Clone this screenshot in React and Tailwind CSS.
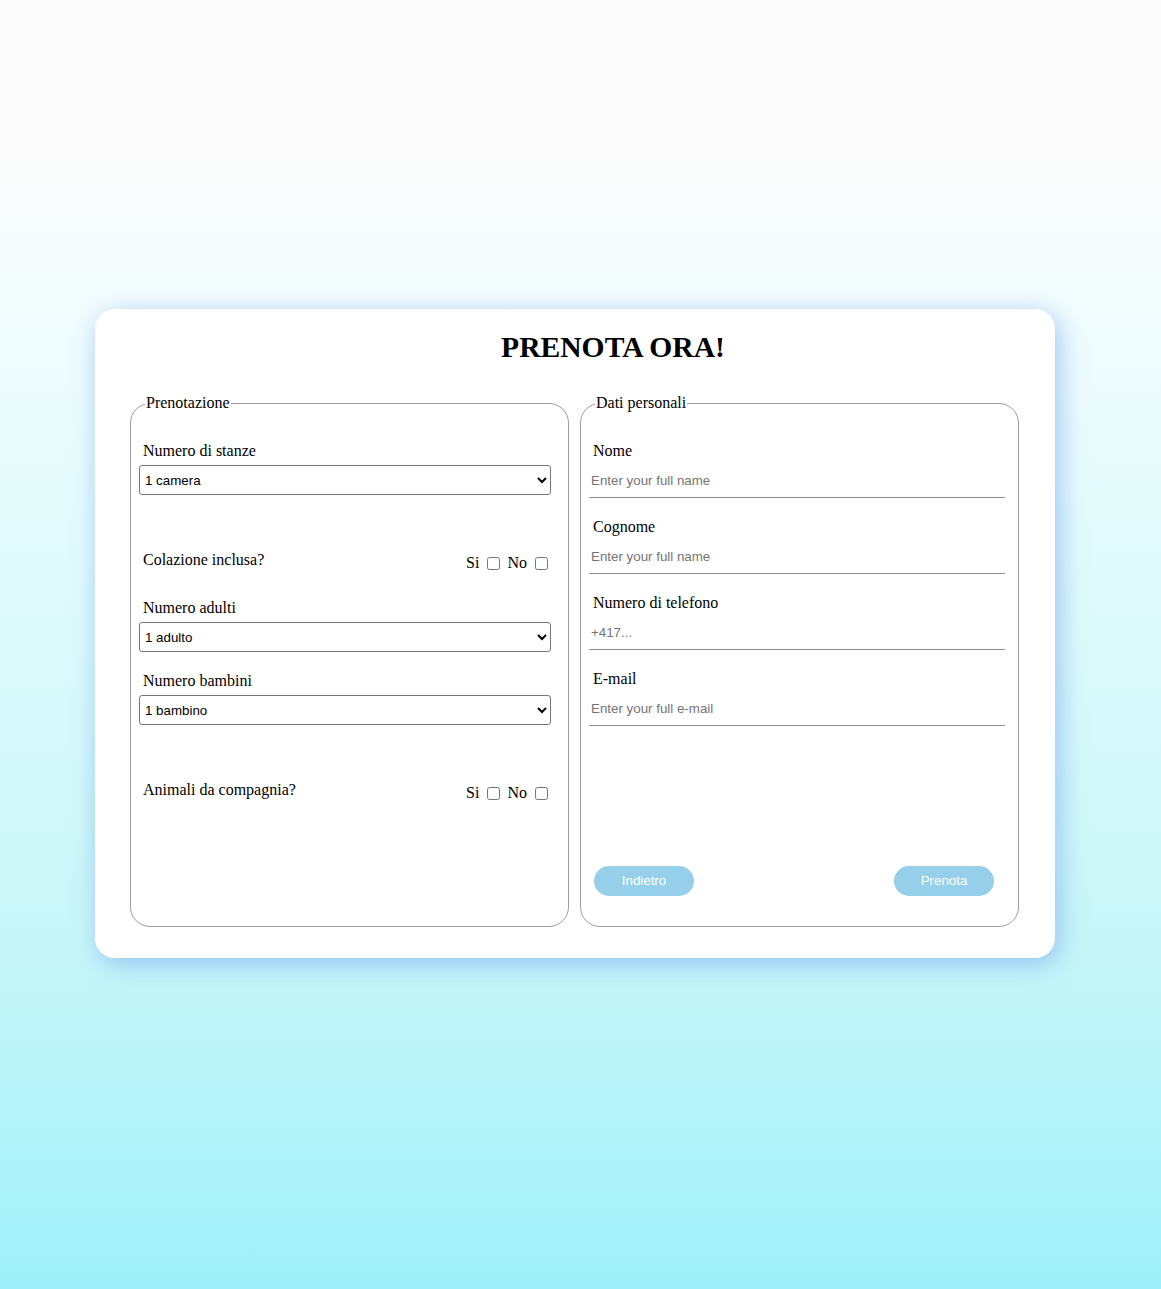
export default function App() {
  const serif = { fontFamily: '"Liberation Serif", "Times New Roman", serif' };
  const label = "block ml-[4px] text-[16px] leading-[18px] text-black";
  const selectCls =
    "block w-[412px] h-[30px] mt-[5px] pl-[1px] border border-[#767676] rounded-[3px] bg-white text-[13.33px] text-black font-['Liberation_Sans',Arial,sans-serif]";
  const inputCls =
    "block w-[416px] h-[32px] mt-[6px] px-[2px] pb-[2px] border-0 border-b border-[#8a8a8a] bg-transparent outline-none text-[13.33px] text-black placeholder:text-[#757575] font-['Liberation_Sans',Arial,sans-serif]";
  const cb = "w-[13px] h-[13px] m-0 ml-[8px]";

  const YesNo = () => (
    <div className="flex items-center mt-[3px] mr-[3px] text-[16px] leading-[18px]">
      <span>Si</span>
      <input type="checkbox" className={cb} />
      <span className="ml-[7px]">No</span>
      <input type="checkbox" className={cb} />
    </div>
  );

  return (
    <div
      className="min-h-[1289px] w-full bg-[linear-gradient(180deg,#fbfbfb_12%,#f1fdfe_25%,#c6f6f8_75%,#9ef0fa_100%)] pt-[309px] pb-[331px]"
      style={serif}
    >
      <div className="ml-[95px] w-[960px] h-[649px] bg-white rounded-[20px] shadow-[4px_6px_26px_rgba(125,172,240,0.7)] pt-[22px] px-[35px]">
        <h1 className="text-center pl-[76px] text-[29.6px] leading-[33px] font-bold text-black">
          PRENOTA ORA!
        </h1>
        <div className="flex gap-[11px] mt-[30px] items-stretch">
          <fieldset className="w-[439px] h-[533px] border border-[#9c9c9c] rounded-[20px] px-[8px] m-0 min-w-0">
            <legend className="ml-[6px] px-[1px] text-[16px] leading-[18.4px]">Prenotazione</legend>
            <label className={label + " mt-[30px]"}>Numero di stanze</label>
            <select className={selectCls} defaultValue="1">
              <option value="1">1 camera</option>
              <option value="2">2 camere</option>
            </select>

            <div className="flex justify-between items-start w-[412px] h-[21px] mt-[56px]">
              <span className="ml-[4px] text-[16px] leading-[18px]">Colazione inclusa?</span>
              <YesNo />
            </div>

            <label className={label + " mt-[27px]"}>Numero adulti</label>
            <select className={selectCls} defaultValue="1">
              <option value="1">1 adulto</option>
              <option value="2">2 adulti</option>
            </select>

            <label className={label + " mt-[20px]"}>Numero bambini</label>
            <select className={selectCls} defaultValue="1">
              <option value="1">1 bambino</option>
              <option value="2">2 bambini</option>
            </select>

            <div className="flex justify-between items-start w-[412px] h-[21px] mt-[56px]">
              <span className="ml-[4px] text-[16px] leading-[18px]">Animali da compagnia?</span>
              <YesNo />
            </div>
          </fieldset>

          <fieldset className="w-[439px] h-[533px] border border-[#9c9c9c] rounded-[20px] px-[8px] m-0 min-w-0">
            <legend className="ml-[6px] px-[1px] text-[16px] leading-[18.4px]">Dati personali</legend>
            <label className={label + " mt-[30px]"}>Nome</label>
            <input className={inputCls} placeholder="Enter your full name" />
            <label className={label + " mt-[20px]"}>Cognome</label>
            <input className={inputCls} placeholder="Enter your full name" />
            <label className={label + " mt-[20px]"}>Numero di telefono</label>
            <input className={inputCls} placeholder="+417..." />
            <label className={label + " mt-[20px]"}>E-mail</label>
            <input className={inputCls} placeholder="Enter your full e-mail" />

            <div className="flex justify-between w-[400px] ml-[5px] mt-[140px]">
              <button className="w-[100px] h-[30px] rounded-full bg-[#96cfea] text-white text-[13.33px] font-medium font-['Liberation_Sans',Arial,sans-serif]">
                Indietro
              </button>
              <button className="w-[100px] h-[30px] rounded-full bg-[#96cfea] text-white text-[13.33px] font-medium font-['Liberation_Sans',Arial,sans-serif]">
                Prenota
              </button>
            </div>
          </fieldset>
        </div>
      </div>
    </div>
  );
}
